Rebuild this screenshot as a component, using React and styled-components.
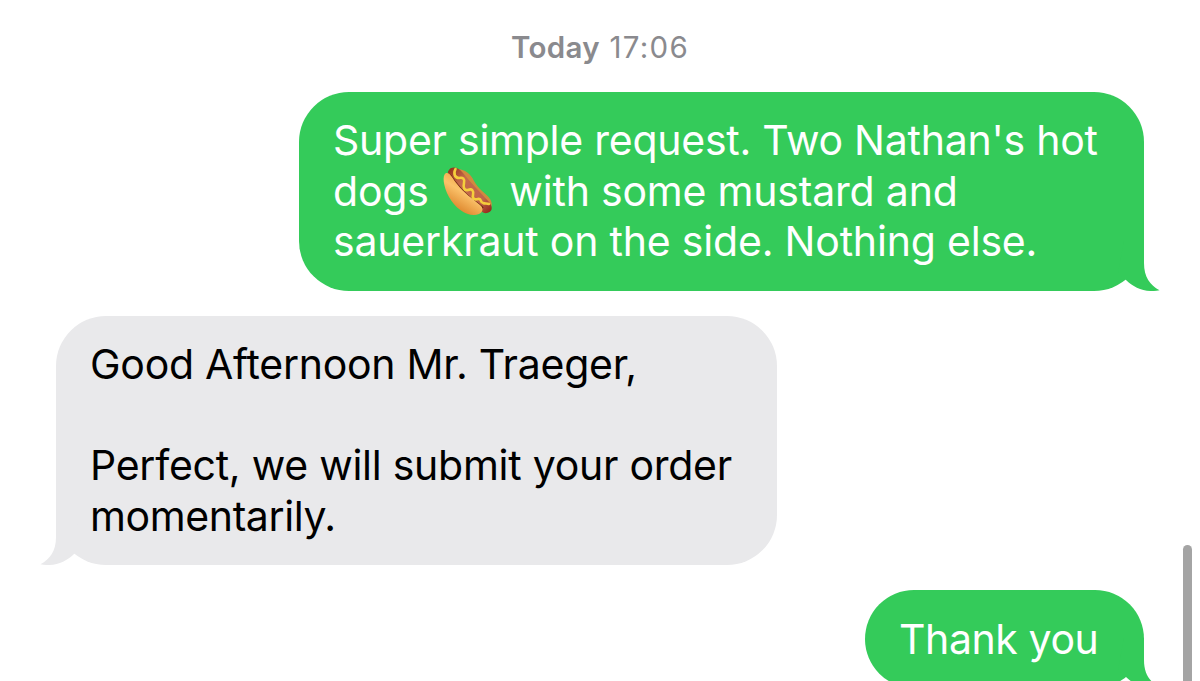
import React from 'react';
import styled, { createGlobalStyle } from 'styled-components';

const GlobalStyle = createGlobalStyle`
    * {
        box-sizing: border-box;
    }
    body {
        margin: 0;
        background: #fff;
        overflow: hidden;
    }
`;

const Screen = styled.main`
    position: relative;
    display: flex;
    flex-direction: column;
    gap: 25.1px;
    width: 1200px;
    height: 681px;
    padding: 28px 56px 0;
    overflow: hidden;
    font-family: Inter, 'Liberation Sans', sans-serif;
`;

const Timestamp = styled.time`
    flex: none;
    height: 38.7px;
    text-align: center;
    font-size: 29.5px;
    line-height: 38px;
    letter-spacing: 1.3px;
    color: #8a8a8e;
    white-space: nowrap;
`;

const Day = styled.span`
    font-weight: 600;
    letter-spacing: 0.3px;
`;

const Bubble = styled.div`
    position: relative;
    flex: none;
    align-self: ${(props) => (props.$sent ? 'flex-end' : 'flex-start')};
    width: ${(props) => props.$width}px;
    padding: 23.5px 34px;
    border-radius: 50px;
    background: ${(props) => (props.$sent ? '#34cb5a' : '#e9e9eb')};
    color: ${(props) => (props.$sent ? '#fff' : '#000')};
`;

const Line = styled.div`
    height: 50.6px;
    font-size: 41px;
    line-height: 50.6px;
    letter-spacing: ${(props) => props.$spacing || 0}px;
    white-space: nowrap;
`;

const TailShape = styled.svg`
    position: absolute;
    bottom: 0;
    ${(props) => (props.$sent ? 'right: -16px;' : 'left: -16px; transform: scaleX(-1);')}
    width: 50px;
    height: 50px;
    fill: ${(props) => (props.$sent ? '#34cb5a' : '#e9e9eb')};
`;

const Emoji = styled.svg`
    width: 52px;
    height: 52px;
    margin: 0 4px 0 2px;
    vertical-align: -12px;
`;

const ScrollThumb = styled.div`
    position: absolute;
    top: 544.5px;
    right: 8.5px;
    width: 8.5px;
    height: 200px;
    border-radius: 5px;
    background: #a4a4a4;
`;

const Tail = ({ sent = false }) => (
    <TailShape $sent={sent} viewBox="0 0 50 50">
        <path d="M14 0H34V22C34 36 40 44 49.5 49.3C36 52 24 47 16 39L8 32Z" />
    </TailShape>
);

const HotDog = () => (
    <Emoji viewBox="0 0 52 52" role="img" aria-label="hot dog">
        <defs>
            <linearGradient id="bun" x1="0.7" y1="0.2" x2="0.3" y2="0.9">
                <stop offset="0" stopColor="#f3a746" />
                <stop offset="0.4" stopColor="#fbc26a" />
                <stop offset="1" stopColor="#db8228" />
            </linearGradient>
            <linearGradient id="sausage" x1="0" y1="0" x2="1" y2="1">
                <stop offset="0" stopColor="#8e2c14" />
                <stop offset="0.3" stopColor="#c4694b" />
                <stop offset="0.75" stopColor="#c0654a" />
                <stop offset="1" stopColor="#8e1f14" />
            </linearGradient>
        </defs>
        <path
            d="M15 3C23 3 29 8 32 15C36 23 45 28 48 33C51 38 50 42 46 42L14 12Z"
            fill="#d08a3e"
        />
        <path
            d="M7 4C10 0 16 1 21 7C28 16 37 25 47 36C53 43 48 48 42 47C30 40 16 24 8 11C6 8 5 6 7 4Z"
            fill="url(#sausage)"
        />
        <path
            d="M8 9C13 17 24 30 35 37L41 42"
            fill="none"
            stroke="#6d2410"
            strokeWidth="2"
        />
        <path
            d="M13.5 3C11 8 13 12 17 12C21 11 23 13 22 17C21 21 22 25 26 24C30 22 32 25 31 29C30 33 33 34 36 33C40 32 38 37 41 37C43 38 45 37 47 38"
            fill="none"
            stroke="#f5ce3c"
            strokeWidth="2.6"
            strokeLinecap="round"
            strokeLinejoin="round"
        />
        <path
            d="M4 7C8 6 11 13 15 18C22 27 31 33 38 39C42 42 41 46 37 48C28 52 14 44 7 31C1 20 0 9 4 7Z"
            fill="url(#bun)"
        />
    </Emoji>
);

const App = () => (
    <>
        <GlobalStyle />
        <Screen>
            <Timestamp>
                <Day>Today</Day> 17:06
            </Timestamp>
            <Bubble $sent $width={845}>
                <Tail sent />
                <Line $spacing={-0.25}>Super simple request. Two Nathan&apos;s hot</Line>
                <Line $spacing={-0.2}>
                    dogs <HotDog /> with some mustard and
                </Line>
                <Line $spacing={-0.2}>sauerkraut on the side. Nothing else.</Line>
            </Bubble>
            <Bubble $width={721}>
                <Tail />
                <Line $spacing={-0.27}>Good Afternoon Mr. Traeger,</Line>
                <Line />
                <Line $spacing={-0.26}>Perfect, we will submit your order</Line>
                <Line $spacing={-0.38}>momentarily.</Line>
            </Bubble>
            <Bubble $sent $width={279}>
                <Tail sent />
                <Line $spacing={-0.4}>Thank you</Line>
            </Bubble>
            <ScrollThumb />
        </Screen>
    </>
);

export default App;
